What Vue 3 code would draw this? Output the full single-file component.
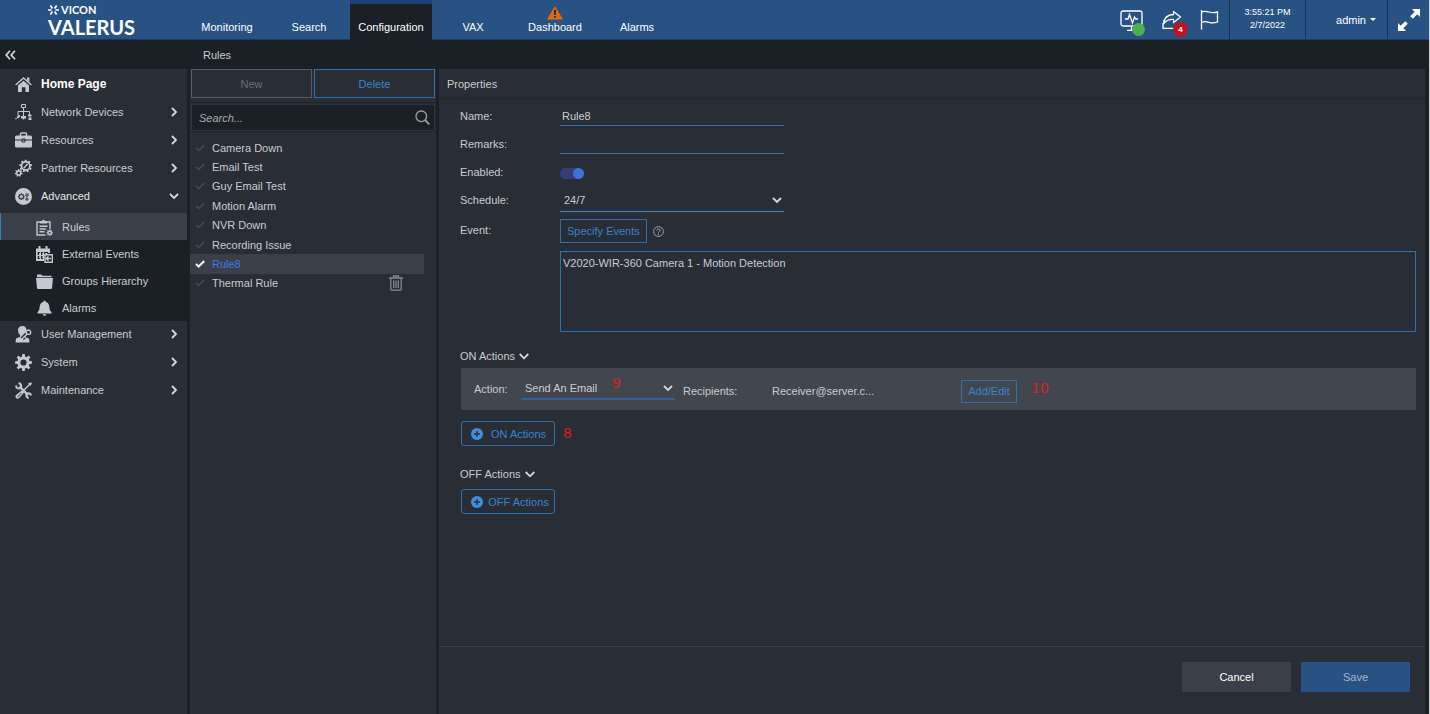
<script setup>
import { ref } from 'vue'

// Outline of a cog with a round hole, drawn with the even-odd rule.
function gear(cx, cy, outer, inner, teeth, hole) {
  const pts = []
  const step = (Math.PI * 2) / teeth
  for (let i = 0; i < teeth; i++) {
    const a = i * step - Math.PI / 2
    const corners = [[-0.3, inner], [-0.2, outer], [0.2, outer], [0.3, inner]]
    for (const [k, r] of corners) {
      pts.push((cx + r * Math.cos(a + k * step)).toFixed(2) + ' ' + (cy + r * Math.sin(a + k * step)).toFixed(2))
    }
  }
  return `M${pts.join('L')}Z` + ring(cx, cy, hole)
}
function ring(cx, cy, r) {
  return `M${cx - r} ${cy}a${r} ${r} 0 1 0 ${2 * r} 0a${r} ${r} 0 1 0 ${-2 * r} 0Z`
}

const icons = {
  home: [
    { c: 'solid', d: 'M3 9.6L8.5 4.7 14 9.6V16h-3.600v-4.800H6.800V16H3Z' },
    { c: 'line', d: 'M.6 9L8.500 1.900 16.400 9' },
    { c: 'solid', d: 'M12 1.500h2.400v5L12 4.200Z' }
  ],
  network: [
    { c: 'thin', d: 'M6.500 .5h4v3h-4ZM8.500 3.500v9M3 11V7.500h11.500V11' },
    { c: 'solid', d: 'M0 14.500l1.500-.5 1.500-3h2v2l-2 1.200H1.500v1H0ZM6 12h5v2.500H9.200v1h-1.400v-1H6ZM13 10.500h3.500v2H13ZM13.500 13.500h3v2.500h-3Z' }
  ],
  briefcase: [
    { c: 'line', d: 'M5.500 4V1.800q0-.8.8-.8h4.400q.8 0 .8.800V4' },
    { c: 'solid', d: 'M1.500 3.500h14q1.500 0 1.500 1.500v9q0 1.500-1.500 1.500h-14Q0 15.500 0 14V5q0-1.500 1.500-1.500Z' },
    { c: 'cut', d: 'M0 8h17' },
    { c: 'cut', d: 'M7 7h3v3H7Z' }
  ],
  partner: [
    { c: 'solid', d: gear(10.700, 6, 6.400, 5, 9, 3.300) },
    { c: 'line', d: 'M8.700 8.300l4-4.600' },
    { c: 'solid', d: gear(3.700, 13, 4, 2.900, 7, 1.300) }
  ],
  advanced: [
    { c: 'solid', d: ring(8.500, 8.500, 8.500) },
    { c: 'hole', d: gear(6.300, 8.700, 3.400, 2.600, 8, 1.600) },
    { c: 'hole', d: gear(12, 7, 1.900, 1.400, 7, .7) },
    { c: 'hole', d: gear(11.900, 11, 1.700, 1.200, 7, .6) }
  ],
  rules: [
    { c: 'line', d: 'M9.500 16H1V3h3M11 3h3v7' },
    { c: 'solid', d: 'M4 4.500V2h2q1.500-3 3 0H11v2.500Z' },
    { c: 'line', d: 'M3.500 7.300h8M3.500 10h6.500M3.500 12.700h5' },
    { c: 'solid', d: gear(13.700, 13.700, 3.300, 2.400, 8, 1) }
  ],
  events: [
    { c: 'solid', d: 'M0 2.500h2.500V0h2v2.500h5V0h2v2.500H14V7H12V6H1.700V13H8v2H0ZM3 7h2v2H3ZM6.200 7h2v2h-2ZM9.300 7h2v1h-2ZM3 10.200h2v2H3ZM6.200 10.200h1.500v2H6.200Z' },
    { c: 'thin', d: 'M4.500 5.500V14M7.500 5.500V14M1 9.500h8' },
    { c: 'line', d: 'M9 8.700h7.300v7.500H9ZM15 12.500h-4.500M12.500 10.300l-2.200 2.200 2.200 2.200' }
  ],
  folder: [
    { c: 'solid', d: 'M1 3.500V2.300q0-.8.8-.8h3.400l1.300 1.300h8.300q.9 0 .9.900v.6H1Z' },
    { c: 'solid', d: 'M0 5h17l-1 10q-.1 1-1.200 1H2.200Q1.100 16 1 15Z' }
  ],
  bell: [
    { c: 'solid', d: 'M7.500 1q1-1.200 2 0v.8q3.600.9 3.800 5 0 3.800 2.200 5.400v1.300H1.500v-1.300q2.200-1.600 2.200-5.400.2-4.100 3.800-5ZM6.500 14.300h4q-2 3.200-4 0Z' }
  ],
  user: [
    { c: 'solid', d: 'M3 4.500Q3 0 7.500 0q4 0 4 4.500 0 3-2 5l.3 1.300 4.200 1.700 .5 4H.500l.5-4L5.200 10.800V9.500Q3 7.500 3 4.500Z' },
    { c: 'cutwide', d: 'M12 8L7 13' },
    { c: 'line', d: 'M12.300 7.700L7 13l1.500 1.500M9.500 10.500l1.300 1.300' },
    { c: 'line', d: ring(13.500, 6.200, 2.200) }
  ],
  gear: [{ c: 'solid', d: gear(8.500, 8.500, 8.500, 6.200, 8, 3.100) }],
  tools: [
    { c: 'thick', d: 'M4.500 4.500l8.500 8.500' },
    { c: 'wide', d: 'M1.300 3.500q-.3 3 2.200 3 2.700 0 2.700-2.700Q6 1.300 3.500 1.200M16 13.500q-.4-2.300-2.700-2.300-2 .3-2 2.200.3 2.300 2.500 2.500' },
    { c: 'line', d: 'M15.500 1.500L9 8' },
    { c: 'solid', d: 'M13 1.500l3-1.200.9.900-1.400 2.800ZM7 8.200L9.200 10.400 4.200 16q-1.800 1.300-3.200-.1-1.300-1.500 0-2.900Z' },
    { c: 'cut', d: 'M2.500 15l4-4' }
  ]
}

const tabs = ['Monitoring', 'Search', 'Configuration', 'VAX', 'Dashboard', 'Alarms']
const menu = [
  { label: 'Home Page', icon: 'home', home: true },
  { label: 'Network Devices', icon: 'network', more: true },
  { label: 'Resources', icon: 'briefcase', more: true },
  { label: 'Partner Resources', icon: 'partner', more: true },
  {
    label: 'Advanced', icon: 'advanced', open: true,
    children: [
      { label: 'Rules', icon: 'rules', active: true },
      { label: 'External Events', icon: 'events' },
      { label: 'Groups Hierarchy', icon: 'folder' },
      { label: 'Alarms', icon: 'bell' }
    ]
  },
  { label: 'User Management', icon: 'user', more: true },
  { label: 'System', icon: 'gear', more: true },
  { label: 'Maintenance', icon: 'tools', more: true }
]
const rules = ['Camera Down', 'Email Test', 'Guy Email Test', 'Motion Alarm', 'NVR Down', 'Recording Issue', 'Rule8', 'Thermal Rule']

const selected = ref('Rule8')
const name = ref('Rule8')
const remarks = ref('')
const enabled = ref(true)
const events = ref('V2020-WIR-360 Camera 1 - Motion Detection')
</script>

<template>
  <div class="app">
    <header class="top">
      <a class="logo" href="#">
        <span class="brand">
          <svg width="11" height="10" viewBox="0 0 11 10" fill="none" stroke="#fff" stroke-width="1.700">
            <path d="M0 5h3.600M7.400 5H11M2.400.5l2 3M8.600.5l-2 3M2.400 9.500l2-3M8.600 9.500l-2-3" />
          </svg>
          VICON
        </span>
        <span class="product">VALERUS</span>
      </a>
      <nav class="tabs">
        <a v-for="t in tabs" :key="t" href="#" :class="{ current: t === 'Configuration' }">
          <svg v-if="t === 'Dashboard'" class="warn" width="16" height="14" viewBox="0 0 16 14">
            <path d="M8 0l8 13.500H0Z" fill="#dd6b10" />
            <path d="M7 4h2l-.3 5H7.300ZM7.200 10h1.600v1.800H7.200Z" fill="#1b2027" />
          </svg>
          {{ t }}
        </a>
      </nav>
      <div class="status">
        <button class="ico" aria-label="System health">
          <svg width="24" height="22" viewBox="0 0 24 22" fill="none" stroke="#fff" stroke-width="1.300">
            <rect x="1" y="1" width="21" height="15" rx="2" />
            <path d="M5 9h3l1.500-4.500 3 8.500 2-6 1.200 2H18M11.500 16v4M7 20.300h9" />
          </svg>
          <span class="dot"></span>
        </button>
        <button class="ico" aria-label="Shared items">
          <svg width="20" height="20" viewBox="0 0 20 20" fill="none" stroke="#fff" stroke-width="1.300" stroke-linejoin="round">
            <path d="M11.500 1.500l7 5.500-7 5.500V9.500Q5 9 1.500 14 2 5 11.500 4.500ZM1 13v5.300h17v-3" />
          </svg>
          <span class="count">4</span>
        </button>
        <button class="ico" aria-label="Flags">
          <svg width="19" height="20" viewBox="0 0 19 20" fill="none" stroke="#fff" stroke-width="1.300">
            <path d="M1.500 0v19.500M1.500 2Q5 .8 9 2t8.500 0v10q-4.500 1.500-8.500.3t-7.500 0" />
          </svg>
        </button>
      </div>
      <div class="clock"><span>3:55:21 PM</span><span>2/7/2022</span></div>
      <button class="account">admin <i class="caret"></i></button>
      <button class="expand" aria-label="Full screen">
        <svg width="22" height="22" viewBox="0 0 22 22" fill="#fff">
          <path d="M14 0h8v8l-2.700-2.700-4.500 4.500-2.600-2.600 4.500-4.500ZM8 22H0v-8l2.700 2.700 4.500-4.500 2.600 2.600-4.500 4.500Z" />
        </svg>
      </button>
    </header>

    <div class="crumbs">
      <button class="collapse" aria-label="Collapse menu">
        <svg width="11" height="10" viewBox="0 0 11 10" fill="none" stroke="#d5d8de" stroke-width="1.700"><path d="M5 .8L1.200 5 5 9.200M10 .8L6.200 5 10 9.200" /></svg>
      </button>
      <span>Rules</span>
    </div>

    <div class="body">
      <nav class="side">
        <template v-for="m in menu" :key="m.label">
          <a href="#" class="item" :class="{ home: m.home, open: m.open }">
            <svg class="icon" width="17" height="17" viewBox="0 0 17 17"><path v-for="(p, i) in icons[m.icon]" :key="i" :class="p.c" :d="p.d" /></svg>
            <span>{{ m.label }}</span>
            <svg v-if="m.more" class="chev" width="10" height="10" viewBox="0 0 10 10"><path d="M3 1l4 4-4 4" /></svg>
            <svg v-if="m.open" class="chev" width="10" height="10" viewBox="0 0 10 10"><path d="M1 3l4 4 4-4" /></svg>
          </a>
          <div v-if="m.children" class="sub">
            <a v-for="s in m.children" :key="s.label" href="#" class="item" :class="{ active: s.active }">
              <svg class="icon" width="17" height="17" viewBox="0 0 17 17"><path v-for="(p, i) in icons[s.icon]" :key="i" :class="p.c" :d="p.d" /></svg>
              <span>{{ s.label }}</span>
            </a>
          </div>
        </template>
      </nav>

      <section class="list">
        <div class="actions">
          <button class="new" disabled>New</button>
          <button class="outline">Delete</button>
        </div>
        <label class="search">
          <input type="search" placeholder="Search..." aria-label="Search rules" />
          <svg width="15" height="15" viewBox="0 0 15 15" fill="none" stroke="#9a9da3" stroke-width="1.300"><circle cx="6.300" cy="6.300" r="5.300" /><path d="M10 10l4.300 4.300" stroke-width="1.800" /></svg>
        </label>
        <ul>
          <li v-for="r in rules" :key="r" :class="{ on: r === selected }" @click="selected = r">
            <svg class="tick" width="10" height="8" viewBox="0 0 10 8"><path d="M.9 3.900l2.800 2.600L9.200 1" /></svg>
            <span>{{ r }}</span>
            <button v-if="r === 'Thermal Rule'" class="trash" aria-label="Delete rule">
              <svg width="14" height="16" viewBox="0 0 14 16" fill="none" stroke="#85898f" stroke-width="1.300">
                <path d="M0 3h14M4.500 3V1h5v2M1.800 3v11q0 1.200 1.200 1.200h8q1.200 0 1.200-1.200V3M4.700 5.500v7.500M7 5.500v7.500M9.300 5.500v7.500" />
              </svg>
            </button>
          </li>
        </ul>
      </section>

      <main class="props">
        <h1>Properties</h1>
        <form class="form" @submit.prevent>
          <div class="fields">
            <label for="name">Name:</label>
            <input id="name" v-model="name" class="line-input" type="text" />
            <label for="remarks">Remarks:</label>
            <input id="remarks" v-model="remarks" class="line-input" type="text" />
            <label for="enabled">Enabled:</label>
            <input id="enabled" v-model="enabled" class="toggle" type="checkbox" />
            <label for="schedule">Schedule:</label>
            <span class="pick schedule">
              <select id="schedule"><option>24/7</option></select>
              <svg width="10" height="10" viewBox="0 0 10 10"><path d="M1 3l4 4 4-4" /></svg>
            </span>
            <label for="events">Event:</label>
            <span class="event">
              <button type="button" class="outline">Specify Events</button>
              <svg width="11" height="11" viewBox="0 0 11 11" fill="none" stroke="#9fa2a8"><circle cx="5.500" cy="5.500" r="4.900" /><path d="M3.900 4.500q0-1.600 1.600-1.600t1.600 1.400q0 .9-1.600 1.700v.6M5.500 7.500v1.200" /></svg>
            </span>
            <textarea id="events" v-model="events" readonly></textarea>
          </div>

          <button type="button" class="heading">ON Actions
            <svg width="10" height="10" viewBox="0 0 10 10"><path d="M.7 3l4.300 4.300L9.300 3" /></svg>
          </button>
          <div class="action">
            <label for="action">Action:</label>
            <span class="pick">
              <select id="action"><option>Send An Email</option></select>
              <svg width="10" height="10" viewBox="0 0 10 10"><path d="M1 3l4 4 4-4" /></svg>
              <em class="note n9">9</em>
            </span>
            <span class="recip">Recipients:</span>
            <span class="mail">Receiver@server.c...</span>
            <span class="edit"><button type="button" class="outline">Add/Edit</button><em class="note n10">10</em></span>
          </div>
          <div class="add-row on-row">
            <button type="button" class="outline add">
              <svg width="12" height="12" viewBox="0 0 12 12"><circle cx="6" cy="6" r="6" fill="#3d8fe0" /><path d="M6 3v6M3 6h6" stroke="#292d35" stroke-width="1.300" /></svg>
              <span>ON Actions</span>
            </button>
            <em class="note n8">8</em>
          </div>
          <button type="button" class="heading">OFF Actions
            <svg width="10" height="10" viewBox="0 0 10 10"><path d="M.7 3l4.300 4.300L9.300 3" /></svg>
          </button>
          <div class="add-row off-row">
            <button type="button" class="outline add">
              <svg width="12" height="12" viewBox="0 0 12 12"><circle cx="6" cy="6" r="6" fill="#3d8fe0" /><path d="M6 3v6M3 6h6" stroke="#292d35" stroke-width="1.300" /></svg>
              <span>OFF Actions</span>
            </button>
          </div>
        </form>
        <footer>
          <button class="cancel">Cancel</button>
          <button class="save">Save</button>
        </footer>
      </main>
    </div>
  </div>
</template>

<style>
body { background: #1b2027; }
</style>

<style scoped>
* { box-sizing: border-box; }
.app {
  min-height: 100vh;
  display: flex;
  flex-direction: column;
  background: #1b2027;
  border-right: 1px solid #cfd2d8;
  color: #c9ccd2;
  font: 11px/14px "Liberation Sans", Arial, sans-serif;
}
a { color: inherit; text-decoration: none; }
button, input, select, textarea { font: inherit; color: inherit; background: none; border: 0; border-radius: 0; padding: 0; margin: 0; outline: 0; }
button { cursor: pointer; }
svg { flex: none; display: block; }

.top { display: flex; height: 40px; background: #285284; border-bottom: 1px solid #1d3a5f; color: #fff; }
.logo { width: 186px; padding: 4px 0 0 48px; font-family: Lato, "Liberation Sans", sans-serif; font-weight: 700; }
.brand { display: flex; align-items: center; gap: 2px; font-size: 11px; line-height: 11px; }
.product { display: block; font-size: 20px; line-height: 24px; }
.tabs { display: flex; margin-right: auto; }
.tabs a { position: relative; width: 82px; padding-top: 20px; text-align: center; }
.tabs .current { background: #1b2027; border-top: 4px solid #1f4076; padding-top: 16px; height: 40px; }
.warn { position: absolute; left: 33px; top: 6px; }
.status { display: flex; align-items: flex-start; gap: 18px; padding: 10px 10px 0 0; }
.ico { position: relative; }
.dot, .count { position: absolute; border-radius: 50%; }
.dot { left: 12px; top: 13px; width: 13px; height: 13px; background: #4caf50; }
.count { left: 11px; top: 12px; width: 15px; height: 15px; background: #bd1622; font-size: 8px; font-weight: 700; line-height: 15px; text-align: center; }
.clock, .account, .expand { border-left: 1px solid #16335a; }
.clock { width: 76px; display: flex; flex-direction: column; align-items: center; padding-top: 6px; font-size: 9px; line-height: 13px; }
.account { width: 82px; display: flex; align-items: center; justify-content: center; gap: 4px; padding-left: 19px; }
.caret { border: 3px solid transparent; border-top-color: #fff; border-bottom: 0; }
.expand { width: 42px; padding: 1px 0 0 10px; }

.crumbs { height: 29px; display: flex; align-items: center; }
.collapse { width: 203px; padding-left: 5px; }

.body { flex: 1; display: flex; gap: 3px; padding-right: 4px; }
.side { width: 187px; background: #292d35; padding-top: 1px; }
.item { display: flex; align-items: center; height: 28px; padding: 0 8px 0 15px; }
.icon { margin-right: 9px; overflow: visible; }
.item.home { color: #fff; font-weight: 700; font-size: 12px; }
.item.open { color: #e4e6ea; }
.icon path { fill: none; stroke: none; }
.icon .solid { fill: #c5c8d0; fill-rule: evenodd; }
.icon .hole { fill: #292d35; fill-rule: evenodd; }
.icon .line { stroke: #c5c8d0; stroke-width: 1.4; }
.icon .thin { stroke: #c5c8d0; stroke-width: 1; }
.icon .wide { stroke: #c5c8d0; stroke-width: 2; }
.icon .thick { stroke: #c5c8d0; stroke-width: 2.4; }
.icon .cut { stroke: #292d35; stroke-width: 1; }
.icon .cutwide { stroke: #292d35; stroke-width: 4; }
.chev { margin-left: auto; }
.chev path, .pick path, .heading path { fill: none; stroke: #d5d8de; stroke-width: 1.8; }
.sub { background: #1b2027; margin: 3px 0 -1px; }
.sub .item { height: 27px; padding-left: 36px; border-left: 0; }
.sub .active { background: #3b3f49; box-shadow: inset 1px 0 #2f7fcb; }
.sub .icon { margin-top: 2px; }

.list { width: 246px; background: #292d35; }
.actions { display: flex; gap: 2px; padding: 0 1px 4px; border-bottom: 1px solid #1f242b; }
.actions button { flex: 1; height: 29px; }
.new { border: 1px solid #575b62; color: #6b6f77; }
.outline { border: 1px solid #2f6fae; color: #3585cf; }
.search { display: flex; align-items: center; margin: 1px 1px 0; padding: 0 4px 0 7px; height: 27px; background: #1b2027; border: 1px solid #2f333b; }
.search input { flex: 1; min-width: 0; font-style: italic; appearance: none; }
.search input::placeholder { color: #a9acb3; opacity: 1; }
ul { list-style: none; margin: 0; padding: 6px 12px 0 0; border-top: 1px solid #1f242b; display: grid; grid-auto-rows: 1fr; min-height: 162px; }
li { display: flex; align-items: center; padding: 0 21px 0 5px; }
.tick { margin-right: 7px; }
.tick path { fill: none; stroke: #42464e; stroke-width: 1.8; }
.on { background: #3b3f49; color: #3b7be0; }
.on .tick path { stroke: #fff; stroke-width: 2; }
.trash { margin-left: auto; }

.props { flex: 1; min-width: 0; display: flex; flex-direction: column; background: #292d35; }
h1 { margin: 0; padding: 8px 8px 7px; font-size: 11px; line-height: 14px; font-weight: 400; border-bottom: 1px solid #22262d; }
.form { flex: 1; padding: 3px 9px 0 21px; }
.fields { display: grid; grid-template-columns: 100px 1fr; grid-auto-rows: minmax(28px, auto); align-items: center; }
.line-input { width: 224px; height: 20px; padding: 0 2px; border-bottom: 1px solid #2f72b3; }
.toggle { appearance: none; width: 24px; height: 11px; margin-top: 3px; border-radius: 6px; background: #353e78; display: flex; }
.toggle::before { content: ""; width: 11px; height: 11px; border-radius: 50%; background: #3a72d8; }
.toggle:checked { justify-content: flex-end; }
.pick { position: relative; display: flex; align-items: center; border-bottom: 1px solid #3585cf; }
.pick svg { position: absolute; right: 2px; pointer-events: none; }
.pick select { appearance: none; width: 100%; height: 20px; padding: 0 4px; }
.pick option { background: #292d35; }
.schedule { width: 224px; }
.schedule select { height: 22px; }
.event { display: flex; align-items: center; gap: 6px; padding-top: 2px; height: 32px; }
.event .outline { height: 24px; padding: 0 6px; }
textarea { grid-column: 2; height: 81px; margin-top: 5px; padding: 4px 2px; border: 1px solid #2f72b3; resize: none; display: block; }
.heading { display: flex; align-items: center; gap: 4px; height: 14px; margin: 17px 0 5px; }
.action { display: flex; align-items: center; height: 42px; margin-left: 1px; padding-left: 13px; background: #42464e; }
.action label { width: 47px; }
.action .pick { width: 154px; margin-bottom: 1px; border-bottom: 2px solid #2f6297; }
.recip { width: 89px; margin: 4px 0 0 8px; }
.mail { width: 189px; margin-top: 4px; }
.edit, .add-row { position: relative; }
.edit .outline { height: 23px; width: 56px; margin-top: 4px; }
.add-row { margin-left: 1px; }
.on-row { padding: 11px 0 4px; }
.off-row { padding-top: 3px; }
.add { display: flex; align-items: center; width: 94px; height: 25px; padding-left: 9px; border-radius: 3px; }
.add span { flex: 1; text-align: center; }
.note { position: absolute; color: #d61f26; font: 14px/16px "DejaVu Sans", sans-serif; }
.n8 { left: 102px; top: 15px; }
.n9 { left: 91px; top: -3px; }
.n10 { left: 70px; top: 4px; }
footer { display: flex; justify-content: flex-end; gap: 10px; padding: 15px 15px 22px; border-top: 1px solid #3b3f47; }
footer button { width: 109px; height: 30px; }
.cancel { background: #3b3f49; color: #fff; }
.save { background: #285284; color: #a9b6c9; }
</style>
